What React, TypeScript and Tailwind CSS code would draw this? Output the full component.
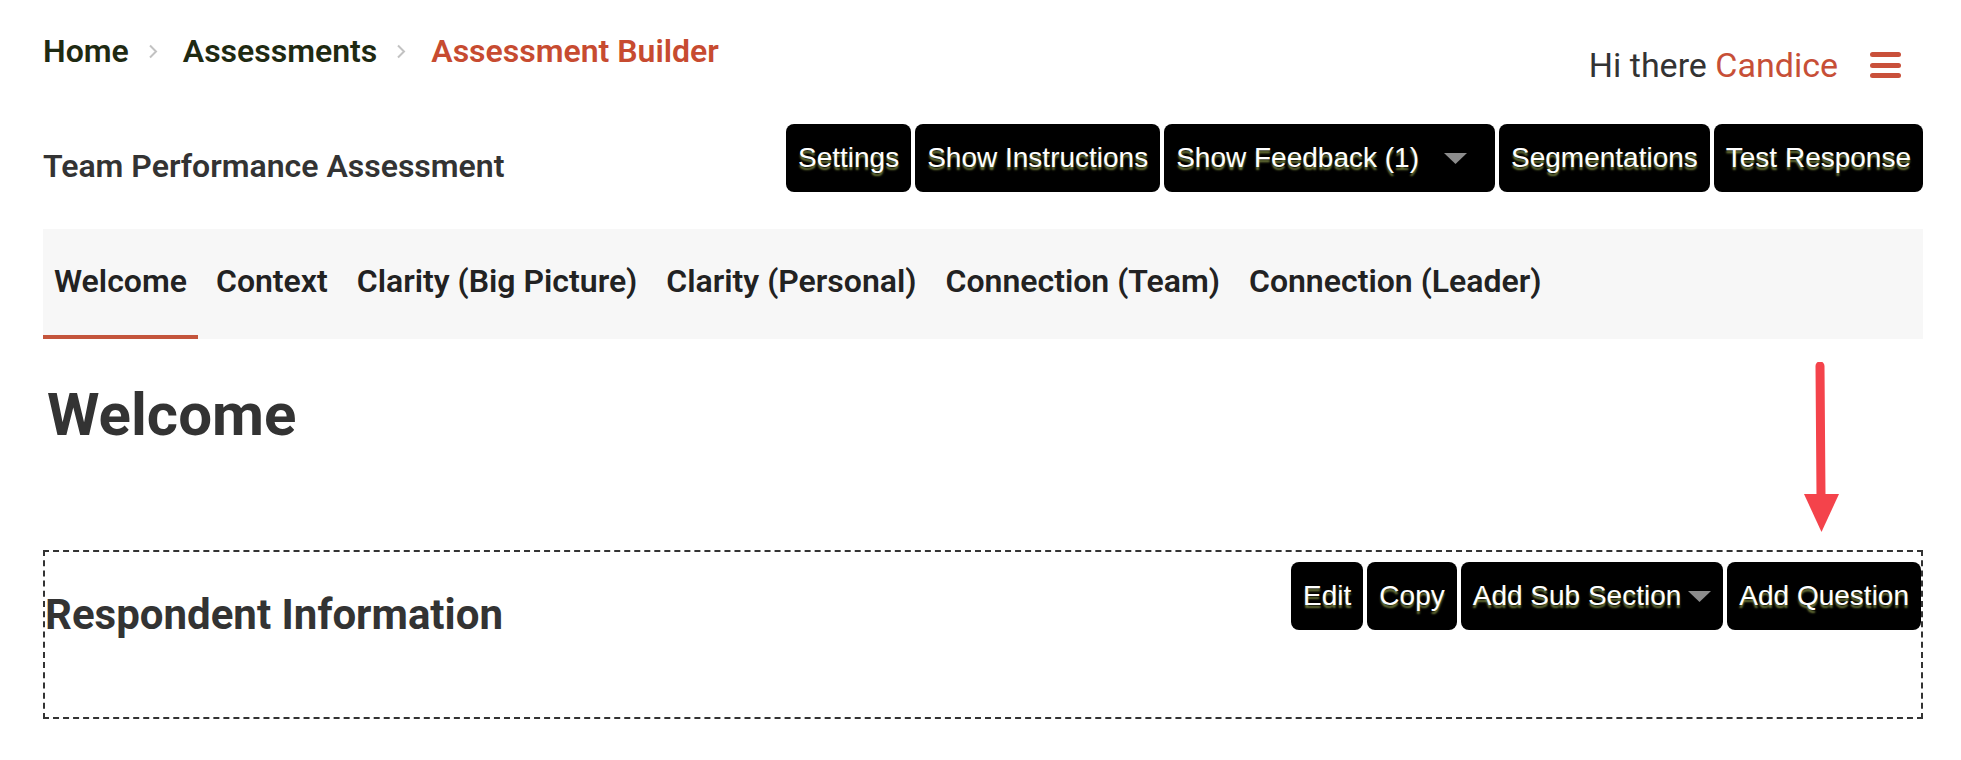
import React from "react";

const tabs = [
  "Welcome",
  "Context",
  "Clarity (Big Picture)",
  "Clarity (Personal)",
  "Connection (Team)",
  "Connection (Leader)",
];

function Caret({ className }: { className?: string }) {
  return (
    <svg width="23" height="11" viewBox="0 0 23 11" className={className}>
      <path d="M0 0 H23 L11.5 11 Z" fill="#8c8c8c" />
    </svg>
  );
}

function BlackButton({
  label,
  caret,
}: {
  label: string;
  caret?: "wide" | "tight";
}) {
  return (
    <button
      className={
        "flex h-[68px] items-center rounded-[8px] bg-black pl-[12px] font-['Liberation_Sans',Arial,sans-serif] text-[28px] text-white [text-shadow:0_3px_2px_#6f7a3a] " +
        (caret === "wide" ? "pr-[28px]" : "pr-[12px]")
      }
    >
      <span>{label}</span>
      {caret === "wide" && <Caret className="ml-[25px]" />}
      {caret === "tight" && <Caret className="ml-[7px]" />}
    </button>
  );
}

function Chevron() {
  return (
    <svg width="10" height="15" viewBox="0 0 10 15" className="ml-[19px] mr-[25px]">
      <path d="M2 1.5 L8 7.5 L2 13.5" fill="none" stroke="#c2c2c2" strokeWidth="2" />
    </svg>
  );
}

export default function App() {
  return (
    <div className="relative min-h-screen bg-white pl-[43px] pr-[38px] font-['Roboto',sans-serif]">
      {/* header */}
      <div className="flex items-start justify-between">
        <nav className="mt-[32px] flex items-center text-[32px] font-semibold leading-[38px]">
          <span className="text-[#1f2a12]">Home</span>
          <Chevron />
          <span className="text-[#1f2a12]">Assessments</span>
          <Chevron />
          <span className="text-[#c74b30]">Assessment Builder</span>
        </nav>
        <div className="mr-[22px] mt-[45px] flex items-center">
          <span className="text-[34px] leading-[40px] text-[#333]">
            Hi there <span className="text-[#c74f37]">Candice</span>
          </span>
          <div className="ml-[32px] flex w-[31px] flex-col gap-[5.5px]">
            <span className="h-[5px] rounded-full bg-[#c9503a]" />
            <span className="h-[5px] rounded-full bg-[#c9503a]" />
            <span className="h-[5px] rounded-full bg-[#c9503a]" />
          </div>
        </div>
      </div>

      <div className="mt-[39px] flex items-start justify-between">
        <h2 className="mt-[23px] text-[32px] font-semibold leading-[38px] text-[#333]">
          Team Performance Assessment
        </h2>
        <div className="flex gap-[4px]">
          <BlackButton label="Settings" />
          <BlackButton label="Show Instructions" />
          <BlackButton label="Show Feedback (1)" caret="wide" />
          <BlackButton label="Segmentations" />
          <BlackButton label="Test Response" />
        </div>
      </div>

      {/* tabs */}
      <div className="mt-[37px] flex h-[110px] gap-[7px] bg-[#f7f7f7]">
        {tabs.map((t, i) => (
          <div
            key={t}
            className={
              "flex h-full items-center border-b-4 px-[11px] pb-[2px] text-[32px] font-semibold leading-[38px] text-[#222] " +
              (i === 0 ? "border-[#c4553c]" : "border-transparent")
            }
          >
            {t}
          </div>
        ))}
      </div>

      <h1 className="mt-[40px] pl-[4px] text-[60px] font-bold leading-[72px] text-[#333]">
        Welcome
      </h1>

      {/* section */}
      <div className="mt-[99px] flex h-[169px] items-start justify-between border-2 border-dashed border-[#333]">
        <h3 className="mt-[38px] text-[42px] font-bold leading-[50px] text-[#333]">
          Respondent Information
        </h3>
        <div className="mt-[10px] flex gap-[4px]">
          <BlackButton label="Edit" />
          <BlackButton label="Copy" />
          <BlackButton label="Add Sub Section" caret="tight" />
          <BlackButton label="Add Question" />
        </div>
      </div>

      {/* annotation arrow */}
      <svg
        width="40"
        height="172"
        viewBox="0 0 40 172"
        className="pointer-events-none absolute left-[1801px] top-[362px]"
      >
        <path d="M19 4 L20 134" stroke="#f4434b" strokeWidth="9" strokeLinecap="round" />
        <path d="M3 132 H38 L20.5 170 Z" fill="#f4434b" />
      </svg>
    </div>
  );
}
